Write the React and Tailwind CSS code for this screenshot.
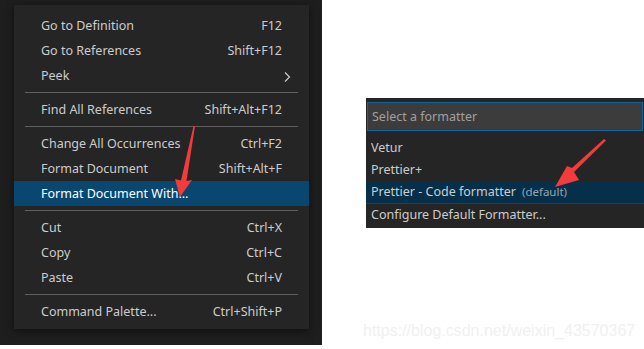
import React from "react";

const font = { fontFamily: '"Noto Sans", "Open Sans", sans-serif' };

function Item({ label, shortcut, active, chevron }) {
  return (
    <div
      className={`flex items-center h-[25px] pl-[27px] pr-[27px] pt-[2px] text-[12.5px] ${
        active ? "bg-[#094771] text-white" : "text-[#cccccc]"
      }`}
    >
      <span className="flex-1">{label}</span>
      {shortcut && <span>{shortcut}</span>}
      {chevron && (
        <svg width="10" height="12" viewBox="0 0 10 12" className="mr-[-10px]">
          <path d="M3 1.5 L7.5 6 L3 10.5" fill="none" stroke="#cccccc" strokeWidth="1.2" />
        </svg>
      )}
    </div>
  );
}

function Sep() {
  return (
    <div className="h-[9px] flex items-center px-[11px]">
      <div className="h-px w-full bg-[#5f5f5f]" />
    </div>
  );
}

export default function App() {
  return (
    <div className="relative w-[644px] h-[349px] bg-white flex overflow-hidden" style={font}>
      <div className="w-[322px] h-[345px] bg-[#1e1e1e] pl-[14px] pt-[5px]">
        <div className="w-[295px] bg-[#252526] pt-[8px] pb-[5px] shadow-[0_2px_8px_rgba(0,0,0,0.5)]">
          <Item label="Go to Definition" shortcut="F12" />
          <Item label="Go to References" shortcut="Shift+F12" />
          <Item label="Peek" chevron />
          <Sep />
          <Item label="Find All References" shortcut="Shift+Alt+F12" />
          <Sep />
          <Item label="Change All Occurrences" shortcut="Ctrl+F2" />
          <Item label="Format Document" shortcut="Shift+Alt+F" />
          <Item label="Format Document With..." active />
          <Sep />
          <Item label="Cut" shortcut="Ctrl+X" />
          <Item label="Copy" shortcut="Ctrl+C" />
          <Item label="Paste" shortcut="Ctrl+V" />
          <Sep />
          <Item label="Command Palette..." shortcut="Ctrl+Shift+P" />
        </div>
      </div>
      <div className="flex-1 flex flex-col">
        <div className="ml-[44px] mt-[98px] w-[278px] bg-[#252526] pt-[4px] pb-[1px] text-[12.5px]">
          <div className="mx-[1px] h-[29px] border border-[#0e639c] bg-[#3c3c3c] flex items-center pl-[4px] pt-[1px] text-[#a0a0a0]">
            Select a formatter
          </div>
          <div className="h-[6px]" />
          <div className="h-[22px] flex items-center pl-[5px] text-[#cccccc]">Vetur</div>
          <div className="h-[22px] flex items-center pl-[5px] text-[#cccccc]">Prettier+</div>
          <div className="h-[22px] flex items-center pl-[5px] text-[#cccccc] bg-[#062f4a]">
            Prettier - Code formatter
            <span className="ml-[6px] text-[11.5px] text-[#9aa4ad]">(default)</span>
          </div>
          <div className="h-[24px] flex items-center pl-[5px] text-[#cccccc] border-t border-[#3a3a3a]">
            Configure Default Formatter...
          </div>
        </div>
        <div
          className="ml-[41px] mt-[91px] text-[16px] text-[#f0f0f0]"
          style={{ fontFamily: '"Liberation Sans", Arial, sans-serif' }}
        >
          https://blog.csdn.net/weixin_43570367
        </div>
      </div>
      <svg className="absolute left-0 top-0 pointer-events-none" width="644" height="349">
        <path d="M193.5 126 L195 126 L186.5 181 L192 180 L180 197 L175 179 L181 180.5 Z" fill="#f23b3b" />
        <path d="M604 139 L606 140.5 L574 172 L579 180 L555 187 L567 166 L572 168 Z" fill="#f23b3b" />
      </svg>
    </div>
  );
}
